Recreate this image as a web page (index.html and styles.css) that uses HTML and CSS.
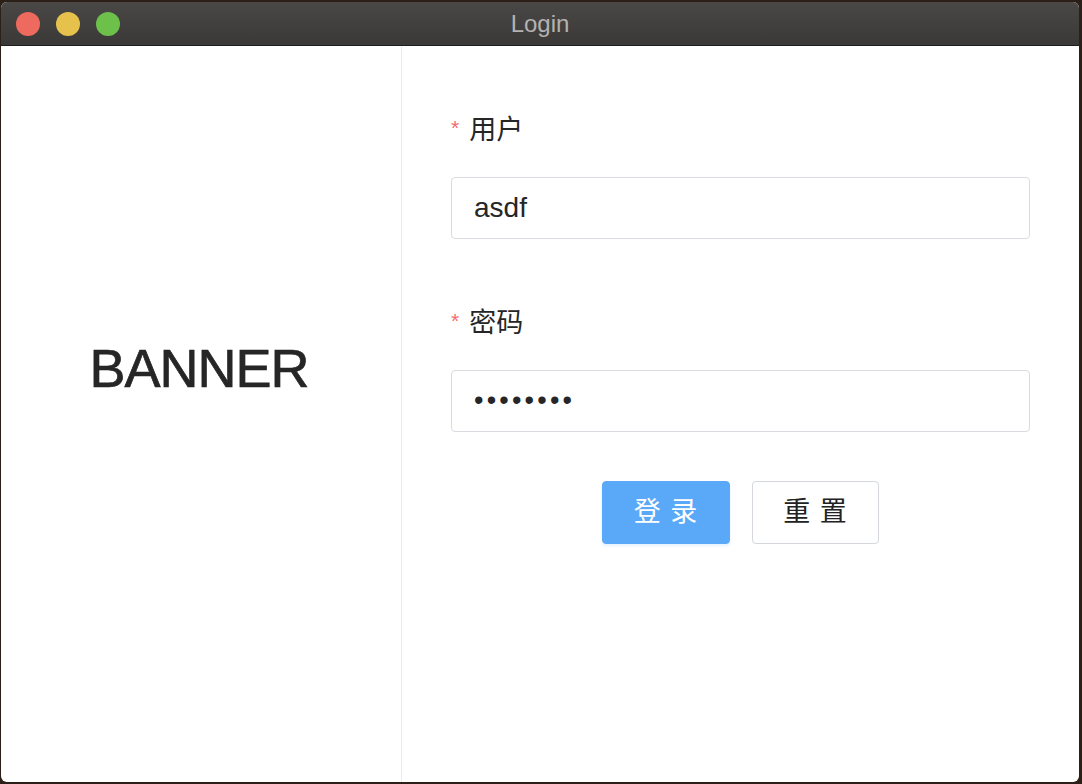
FILE: index.html
```html
<!DOCTYPE html>
<html lang="zh-CN">
<head>
<meta charset="utf-8">
<title>Login</title>
<link rel="stylesheet" href="styles.css">
</head>
<body>
<div class="window">
  <div class="titlebar">
    <div class="lights">
      <span class="light red"></span>
      <span class="light yellow"></span>
      <span class="light green"></span>
    </div>
    <div class="title">Login</div>
  </div>
  <div class="content">
    <div class="banner"><span class="banner-text">BANNER</span></div>
    <div class="form-panel">
      <div class="form-item">
        <div class="label"><span class="req">*</span>用户</div>
        <div class="input">asdf</div>
      </div>
      <div class="form-item last">
        <div class="label"><span class="req">*</span>密码</div>
        <div class="input dots">••••••••</div>
      </div>
      <div class="actions">
        <div class="btn primary">登 录</div>
        <div class="btn plain">重 置</div>
      </div>
    </div>
  </div>
</div>
</body>
</html>
```

FILE: styles.css
```css
html, body {
  margin: 0;
  padding: 0;
}
body {
  width: 1082px;
  height: 784px;
  background: #2b1f18;
  font-family: "Liberation Sans", "Noto Sans CJK SC", sans-serif;
  padding: 2px 3px 2px 1px;
  box-sizing: border-box;
  overflow: hidden;
}
.window {
  width: 1078px;
  height: 780px;
  background: #fff;
  border-radius: 6px;
  overflow: hidden;
  display: flex;
  flex-direction: column;
}
.titlebar {
  height: 43px;
  flex: none;
  background: linear-gradient(#4a4847, #3b3938);
  border-bottom: 1px solid #1f1e1e;
  position: relative;
  display: flex;
  align-items: center;
  justify-content: center;
}
.lights {
  position: absolute;
  left: 15px;
  top: 10px;
  display: flex;
  gap: 16px;
}
.light {
  width: 24px;
  height: 24px;
  border-radius: 50%;
  display: block;
}
.red { background: #ee6a5e; }
.yellow { background: #e6c24c; }
.green { background: #6dc04a; }
.title {
  color: #b4b2b1;
  font-size: 24px;
  line-height: 43px;
}
.content {
  flex: 1;
  display: flex;
}
.banner {
  width: 400px;
  flex: none;
  border-right: 1px solid #ececec;
  display: flex;
  align-items: center;
  justify-content: center;
  padding-bottom: 92px;
}
.banner-text {
  font-size: 54px;
  letter-spacing: -1px;
  color: #262626;
  -webkit-text-stroke: 0.7px #262626;
  padding-right: 4px;
}
.form-panel {
  flex: 1;
  padding: 62px 49px 0 49px;
}
.form-item {
  margin-bottom: 62px;
}
.form-item.last {
  margin-bottom: 49px;
}
.label {
  height: 40px;
  line-height: 40px;
  font-size: 27px;
  color: #262626;
  margin-bottom: 29px;
}
.req {
  color: #f56c6c;
  font-size: 21px;
  margin-right: 10px;
  vertical-align: 4px;
}
.input {
  height: 62px;
  box-sizing: border-box;
  border: 1.5px solid #d8dbe0;
  border-radius: 4px;
  padding: 0 22px;
  font-size: 28px;
  line-height: 59px;
  color: #262626;
}
.dots {
  letter-spacing: 3.2px;
  font-size: 27px;
}
.actions {
  display: flex;
  justify-content: center;
  gap: 22px;
}
.btn {
  width: 128px;
  height: 63px;
  box-sizing: border-box;
  border-radius: 4px;
  font-size: 27px;
  line-height: 61px;
  text-align: center;
  letter-spacing: 1px;
}
.primary {
  background: #5aa9f8;
  color: #fff;
  border: 1px solid #5aa9f8;
  box-shadow: 0 2px 3px rgba(90, 169, 248, 0.15);
}
.plain {
  background: #fff;
  color: #222;
  border: 1.5px solid #d4d7dc;
  width: 127px;
}
```
